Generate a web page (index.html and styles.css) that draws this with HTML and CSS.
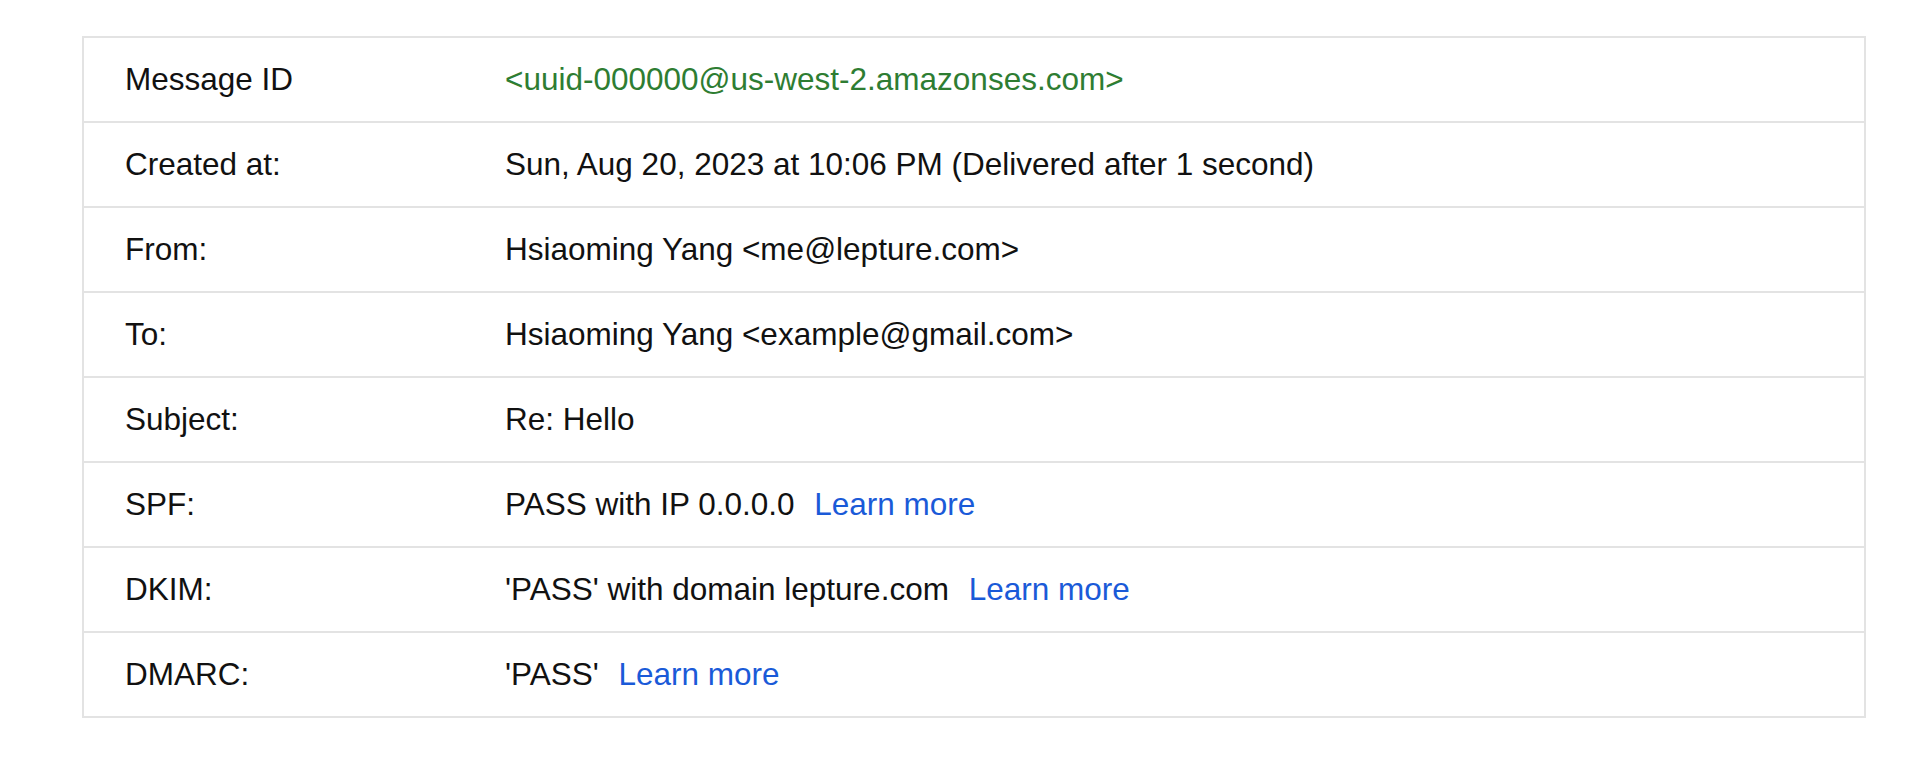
FILE: index.html
```html
<!DOCTYPE html>
<html lang="en">
<head>
<meta charset="utf-8">
<title>Original message</title>
<link rel="stylesheet" href="styles.css">
</head>
<body>
<div class="page">
  <div class="table">
    <div class="row"><div class="label">Message ID</div><div class="value id">&lt;uuid-000000@us-west-2.amazonses.com&gt;</div></div>
    <div class="row"><div class="label">Created at:</div><div class="value">Sun, Aug 20, 2023 at 10:06 PM (Delivered after 1 second)</div></div>
    <div class="row"><div class="label">From:</div><div class="value">Hsiaoming Yang &lt;me@lepture.com&gt;</div></div>
    <div class="row"><div class="label">To:</div><div class="value">Hsiaoming Yang &lt;example@gmail.com&gt;</div></div>
    <div class="row"><div class="label">Subject:</div><div class="value">Re: Hello</div></div>
    <div class="row"><div class="label">SPF:</div><div class="value">PASS with IP 0.0.0.0 <a class="learn" href="#">Learn more</a></div></div>
    <div class="row"><div class="label">DKIM:</div><div class="value">'PASS' with domain lepture.com <a class="learn" href="#">Learn more</a></div></div>
    <div class="row"><div class="label">DMARC:</div><div class="value">'PASS' <a class="learn" href="#">Learn more</a></div></div>
  </div>
</div>
</body>
</html>
```

FILE: styles.css
```css
html, body {
  margin: 0;
  padding: 0;
  background: #ffffff;
}

.page {
  padding: 36px 54px 0 82px;
  font-family: "Liberation Sans", Arial, sans-serif;
  font-size: 31.5px;
  color: #111111;
}

.table {
  border: 2px solid #e3e3e3;
}

.row {
  display: flex;
  align-items: center;
  height: 83px;
  border-bottom: 2px solid #e3e3e3;
}

.row:last-child {
  border-bottom: none;
}

.label {
  box-sizing: border-box;
  width: 421px;
  padding-left: 41px;
  flex: none;
}

.value {
  flex: 1;
  white-space: nowrap;
}

.id {
  color: #2e7d32;
}

.learn {
  color: #1a5ad8;
  text-decoration: none;
  margin-left: 11px;
}
```
